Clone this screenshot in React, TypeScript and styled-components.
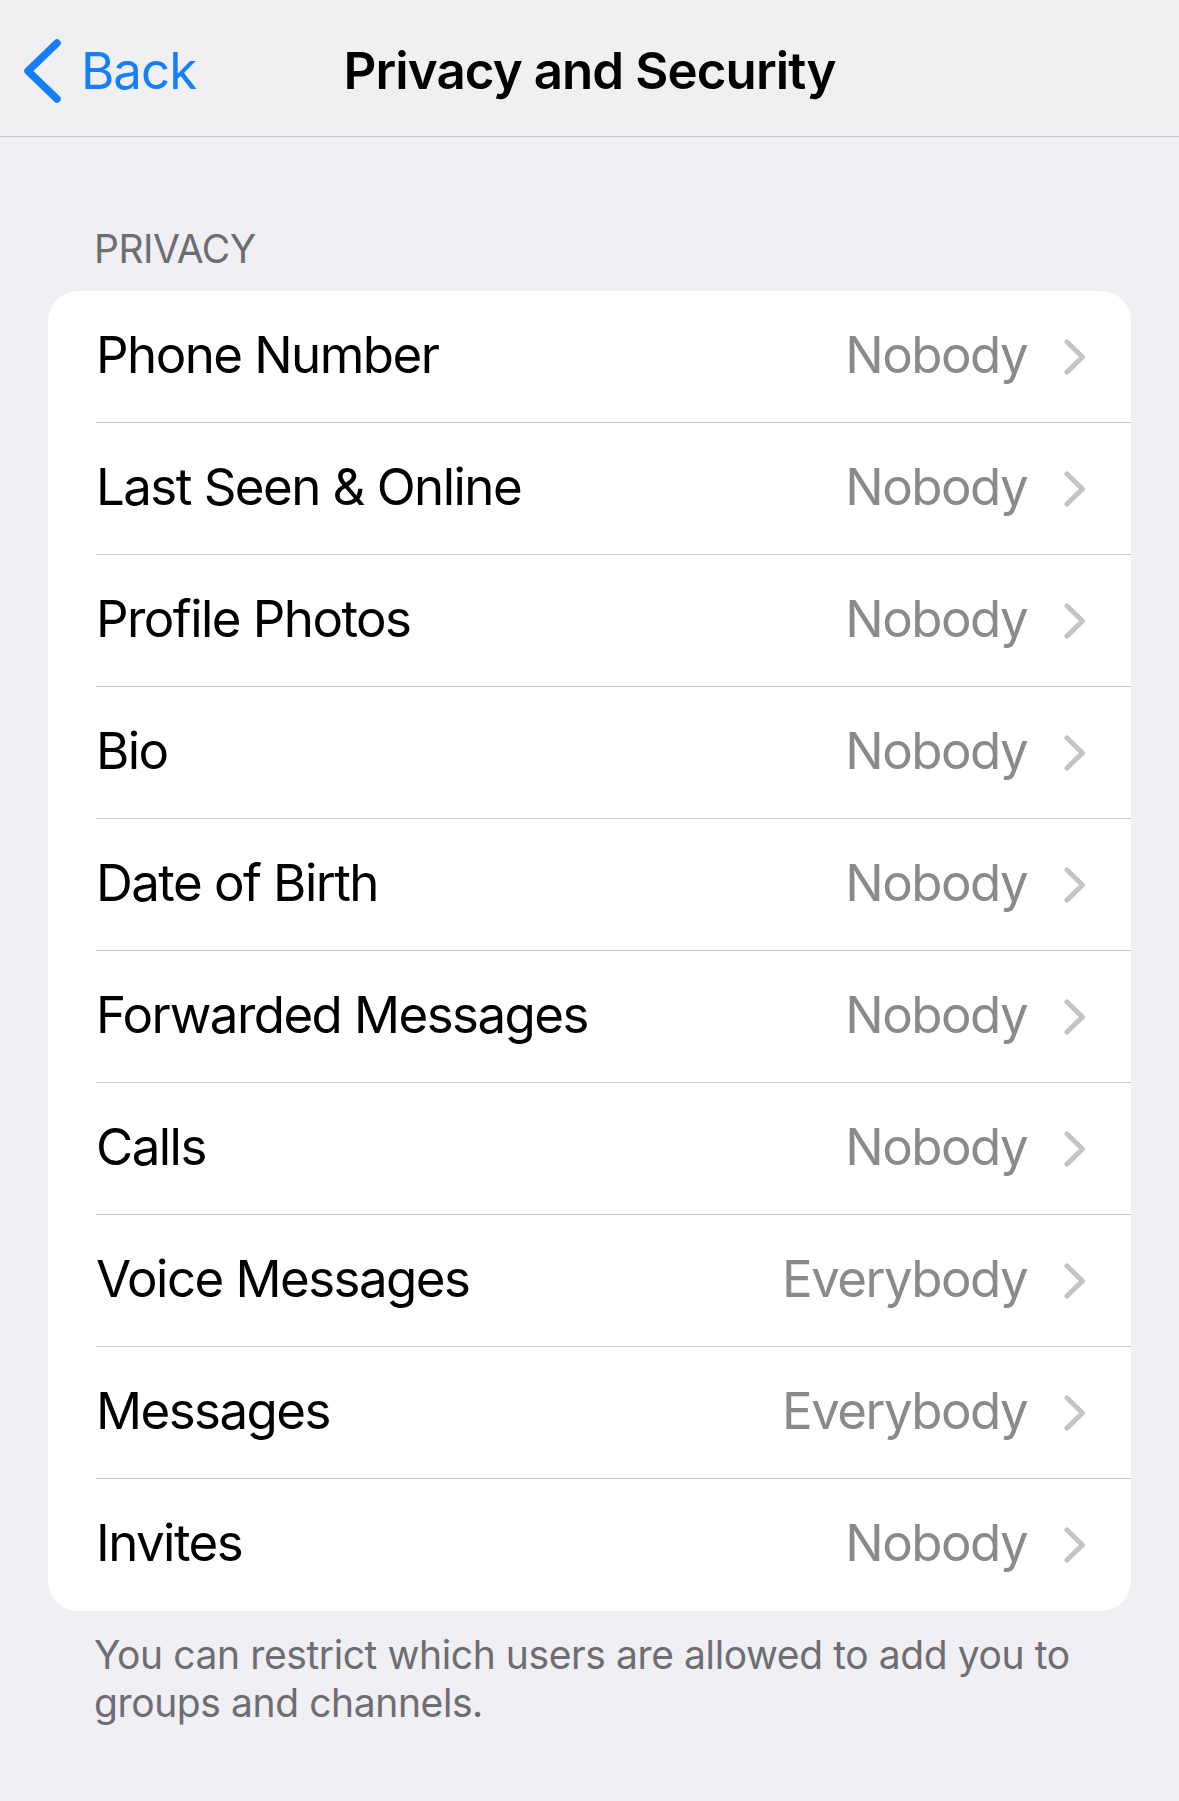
import React from "react";
import styled, { createGlobalStyle } from "styled-components";

const GlobalStyle = createGlobalStyle`
  html, body {
    margin: 0;
    padding: 0;
    background: #efeff4;
  }
  body {
    font-family: Inter, "Noto Sans", "Liberation Sans", sans-serif;
    -webkit-font-smoothing: antialiased;
  }
  * { box-sizing: border-box; }
`;

const Page = styled.div`
  width: 1179px;
  min-height: 1801px;
  background: #efeff4;
  display: flex;
  flex-direction: column;
`;

const NavBar = styled.header`
  height: 137px;
  background: #f0f0f2;
  border-bottom: 1px solid #c6c6c9;
  display: grid;
  grid-template-columns: 1fr auto 1fr;
  align-items: center;
  padding-top: 5px;
`;

const BackButton = styled.button`
  justify-self: start;
  display: flex;
  align-items: center;
  gap: 20px;
  padding: 0 0 0 21px;
  border: none;
  background: none;
  color: #157efb;
  font-family: inherit;
  font-size: 51px;
  font-weight: 400;
  letter-spacing: -1px;
  cursor: pointer;
`;

const Title = styled.h1`
  margin: 0;
  font-size: 51px;
  font-weight: 600;
  color: #000;
  letter-spacing: -0.9px;
`;

const Content = styled.main`
  padding: 88px 48px 0;
  display: flex;
  flex-direction: column;
`;

const SectionHeader = styled.div`
  padding-left: 46px;
  font-size: 39px;
  color: #6d6d72;
  letter-spacing: -0.5px;
  line-height: 48px;
  margin-bottom: 18px;
`;

const Card = styled.div`
  background: #ffffff;
  border-radius: 30px;
  overflow: hidden;
`;

const Row = styled.div`
  height: 132px;
  display: flex;
  align-items: center;
  padding: 0 45px 0 48px;
  position: relative;
  &:not(:last-child)::after {
    content: "";
    position: absolute;
    left: 48px;
    right: 0;
    bottom: 0;
    height: 1.5px;
    background: #c8c8cc;
  }
`;

const Label = styled.span`
  flex: 1;
  font-size: 51px;
  color: #000;
  letter-spacing: -1.55px;
  padding-bottom: 6px;
`;

const Value = styled.span`
  font-size: 51px;
  color: #8a8a8e;
  letter-spacing: -1.55px;
  margin-right: 37px;
  padding-bottom: 6px;
`;

const Footer = styled.p`
  margin: 20px 0 0;
  padding: 0 46px;
  font-size: 39px;
  line-height: 48px;
  color: #6d6d72;
  letter-spacing: -0.4px;
`;

const BackChevron = () => (
  <svg width="40" height="66" viewBox="0 0 40 66" fill="none">
    <polyline
      points="36,5 7,33 36,61"
      stroke="#157efb"
      strokeWidth="7.5"
      strokeLinecap="round"
      strokeLinejoin="round"
    />
  </svg>
);

const RowChevron = () => (
  <svg width="22" height="36" viewBox="0 0 22 36" fill="none">
    <polyline
      points="3,3 18.5,18 3,33"
      stroke="#c4c4c7"
      strokeWidth="5"
      strokeLinecap="round"
      strokeLinejoin="round"
    />
  </svg>
);

const items: { label: string; value: string }[] = [
  { label: "Phone Number", value: "Nobody" },
  { label: "Last Seen & Online", value: "Nobody" },
  { label: "Profile Photos", value: "Nobody" },
  { label: "Bio", value: "Nobody" },
  { label: "Date of Birth", value: "Nobody" },
  { label: "Forwarded Messages", value: "Nobody" },
  { label: "Calls", value: "Nobody" },
  { label: "Voice Messages", value: "Everybody" },
  { label: "Messages", value: "Everybody" },
  { label: "Invites", value: "Nobody" },
];

export default function App() {
  return (
    <>
      <GlobalStyle />
      <Page>
        <NavBar>
          <BackButton>
            <BackChevron />
            Back
          </BackButton>
          <Title>Privacy and Security</Title>
          <div />
        </NavBar>
        <Content>
          <SectionHeader>PRIVACY</SectionHeader>
          <Card>
            {items.map((it) => (
              <Row key={it.label}>
                <Label>{it.label}</Label>
                <Value>{it.value}</Value>
                <RowChevron />
              </Row>
            ))}
          </Card>
          <Footer>
            You can restrict which users are allowed to add you to groups and
            channels.
          </Footer>
        </Content>
      </Page>
    </>
  );
}
